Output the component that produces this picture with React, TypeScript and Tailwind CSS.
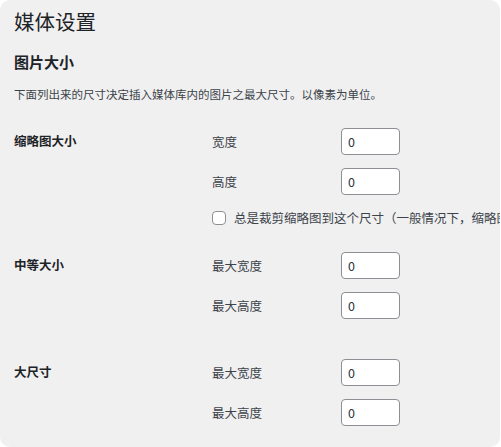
import React from 'react';

const font = { fontFamily: '"Noto Sans CJK SC", "Noto Sans", sans-serif' };

function SizeInput() {
  return (
    <input
      type="text"
      defaultValue="0"
      className="w-[59px] h-[27px] shrink-0 rounded-[4px] border border-[#8c8f94] bg-white pl-[6px] text-[12.5px] text-[#2c3338] outline-none"
    />
  );
}

function Field({ label }: { label: string }) {
  return (
    <div className="flex items-center">
      <span className="w-[129px] shrink-0 text-[12.5px] leading-[16px] text-[#3c434a]">{label}</span>
      <SizeInput />
    </div>
  );
}

function Section({
  title,
  fields,
  children,
  className = '',
}: {
  title: string;
  fields: string[];
  children?: React.ReactNode;
  className?: string;
}) {
  return (
    <div className={`flex ${className}`}>
      <div className="w-[198px] shrink-0 h-[27px] flex items-center text-[12.5px] font-bold text-[#1d2327]">
        {title}
      </div>
      <div className="flex flex-col gap-[13px] shrink-0">
        {fields.map((f) => (
          <Field key={f} label={f} />
        ))}
        {children}
      </div>
    </div>
  );
}

export default function App() {
  return (
    <div className="w-[501px] h-[447px] bg-white" style={font}>
      <div className="w-[500px] h-[447px] rounded-[10px] bg-[#f0f0f0] overflow-hidden px-[14px] pt-[7px]">
        <h1 className="text-[20.5px] leading-[28px] text-[#1d2327]">媒体设置</h1>
        <h2 className="mt-[17px] text-[15px] leading-[20px] font-bold text-[#1d2327]">图片大小</h2>
        <p className="mt-[14px] text-[11.5px] leading-[16px] text-[#3c434a]">
          下面列出来的尺寸决定插入媒体库内的图片之最大尺寸。以像素为单位。
        </p>

        <Section title="缩略图大小" fields={['宽度', '高度']} className="mt-[26px]">
          <label className="flex items-center h-[18px] mt-px whitespace-nowrap">
            <span className="w-[14px] h-[14px] rounded-[4px] border border-[#8c8f94] bg-white shrink-0" />
            <span className="ml-[8px] text-[12.5px] text-[#3c434a]">
              总是裁剪缩略图到这个尺寸（一般情况下，缩略图应保持与原图相仿的比例）
            </span>
          </label>
        </Section>

        <Section title="中等大小" fields={['最大宽度', '最大高度']} className="mt-[25px]" />

        <Section title="大尺寸" fields={['最大宽度', '最大高度']} className="mt-[40px]" />
      </div>
    </div>
  );
}
